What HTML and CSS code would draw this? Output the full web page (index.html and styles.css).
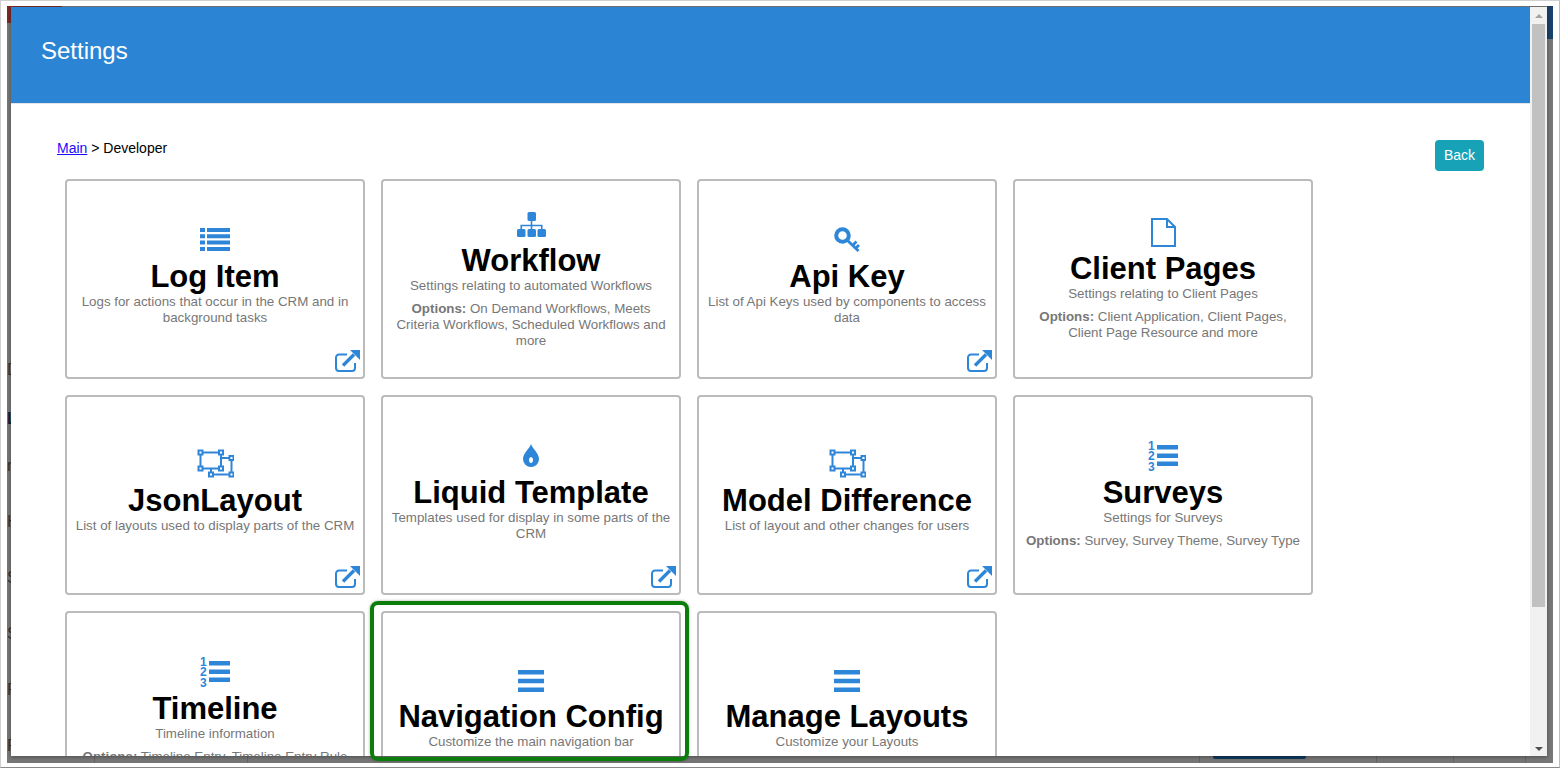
FILE: index.html
```html
<!DOCTYPE html>
<html lang="en">
<head>
<meta charset="utf-8">
<title>Settings</title>
<link rel="stylesheet" href="styles.css">
</head>
<body>
<svg class="defs" width="0" height="0" aria-hidden="true">
  <symbol id="i-ext" viewBox="0 0 25 22">
    <path d="M12 4.500H4a3 3 0 0 0-3 3V18a3 3 0 0 0 3 3h13a3 3 0 0 0 3-3v-5" fill="none" stroke="currentColor" stroke-width="2"/>
    <path d="M8 15.500l11-11" fill="none" stroke="currentColor" stroke-width="3.400"/>
    <path d="M15 0h10v10z" fill="currentColor"/>
  </symbol>
  <symbol id="i-ol" viewBox="0 0 30 30">
    <text class="ol-num" x="0" y="9">1</text>
    <text class="ol-num" x="0" y="19">2</text>
    <text class="ol-num" x="0" y="29.500">3</text>
    <path d="M9 4h21v4.500H9zM9 12.500h21V17H9zM9 20.500h21V25H9z" fill="currentColor"/>
  </symbol>
  <symbol id="i-bars" viewBox="0 0 26 22">
    <path d="M0 0h26v4.600H0zM0 8.700h26v4.600H0zM0 17.400h26V22H0z" fill="currentColor"/>
  </symbol>
  <symbol id="i-group" viewBox="0 0 37 29">
    <path d="M3.500 3.500H24V19.500H3.500zM24 9h10.500v16.500H14V19.500" fill="none" stroke="currentColor" stroke-width="2"/>
    <g fill="#fff" stroke="currentColor" stroke-width="2">
      <rect x="1.500" y="1.500" width="4" height="4"/><rect x="22" y="1.500" width="4" height="4"/>
      <rect x="1.500" y="17.500" width="4" height="4"/><rect x="22" y="17.500" width="4" height="4"/>
      <rect x="32.500" y="7" width="4" height="4"/><rect x="32.500" y="23.500" width="4" height="4"/>
      <rect x="12" y="23.500" width="4" height="4"/>
    </g>
  </symbol>
</svg>

<div class="frame">
  <div class="backdrop">
    <div class="bg-top">
      <span class="bg-red"></span>
      <span class="bg-navy"></span>
    </div>
    <div class="bg-letters">
      <span class="bg-letter">D</span>
      <span class="bg-letter bg-letter-strong">L</span>
      <span class="bg-letter bg-letter-tight">n</span>
      <span class="bg-letter">H</span>
      <span class="bg-letter">S</span>
      <span class="bg-letter">S</span>
      <span class="bg-letter">R</span>
      <span class="bg-letter">F</span>
    </div>
    <div class="bg-bottom">
      <span class="bg-cell bg-cell-a"></span>
      <span class="bg-cell bg-cell-b"></span>
      <span class="bg-cell bg-cell-c"></span>
      <span class="bg-navy-btn"></span>
      <span class="bg-cell bg-cell-d"></span>
      <span class="bg-cell bg-cell-e"></span>
      <span class="bg-cell bg-cell-f"></span>
    </div>

    <div class="modal">
      <div class="modal-main">
        <header class="modal-head">
          <h1 class="modal-title">Settings</h1>
        </header>
        <div class="modal-body">
          <div class="crumb-row">
            <div class="crumbs"><a class="crumb-link" href="#">Main</a> &gt; Developer</div>
            <button class="back-btn" type="button">Back</button>
          </div>
          <div class="cards">
            <article class="card">
              <div class="ico-box"><svg class="ico ico-list" viewBox="0 0 30 23"><path d="M0 0h5v4H0zM0 6.300h5v4H0zM0 12.600h5v4H0zM0 19h5v4H0zM7 0h23v4H7zM7 6.300h23v4H7zM7 12.600h23v4H7zM7 19h23v4H7z" fill="currentColor"/></svg></div>
              <h2 class="card-title">Log Item</h2>
              <p class="card-desc">Logs for actions that occur in the CRM and in background tasks</p>
              <svg class="ext"><use href="#i-ext"/></svg>
            </article>
            <article class="card">
              <div class="ico-box"><svg class="ico ico-flow" viewBox="0 0 29 25"><g fill="currentColor"><rect x="10.500" width="8.500" height="9" rx="1.500"/><rect y="17" width="8.500" height="8" rx="1.500"/><rect x="10.500" y="17" width="8.500" height="8" rx="1.500"/><rect x="20.500" y="17" width="8.500" height="8" rx="1.500"/></g><path d="M14.500 8v9M4.250 17v-3.500h20.500V17" fill="none" stroke="currentColor" stroke-width="1.600"/></svg></div>
              <h2 class="card-title">Workflow</h2>
              <p class="card-desc">Settings relating to automated Workflows</p>
              <p class="card-opts"><b>Options:</b> On Demand Workflows, Meets Criteria Workflows, Scheduled Workflows and more</p>
            </article>
            <article class="card">
              <div class="ico-box"><svg class="ico ico-key" viewBox="0 0 27 25"><circle cx="8.500" cy="8.500" r="6.300" fill="none" stroke="currentColor" stroke-width="4"/><path d="M13 13l11.500 11M18.500 18.500l4-4M21.500 21.500l3.500-3.500" fill="none" stroke="currentColor" stroke-width="2.800"/></svg></div>
              <h2 class="card-title">Api Key</h2>
              <p class="card-desc">List of Api Keys used by components to access data</p>
              <svg class="ext"><use href="#i-ext"/></svg>
            </article>
            <article class="card">
              <div class="ico-box"><svg class="ico ico-file" viewBox="0 0 25 29"><path d="M1 1h15l8 8v19H1zM16 1v8h8" fill="none" stroke="currentColor" stroke-width="2"/></svg></div>
              <h2 class="card-title">Client Pages</h2>
              <p class="card-desc">Settings relating to Client Pages</p>
              <p class="card-opts"><b>Options:</b> Client Application, Client Pages, Client Page Resource and more</p>
            </article>

            <article class="card">
              <div class="ico-box"><svg class="ico ico-group"><use href="#i-group"/></svg></div>
              <h2 class="card-title">JsonLayout</h2>
              <p class="card-desc">List of layouts used to display parts of the CRM</p>
              <svg class="ext"><use href="#i-ext"/></svg>
            </article>
            <article class="card">
              <div class="ico-box"><svg class="ico ico-drop" viewBox="0 0 16 23"><path fill-rule="evenodd" d="M8 0c1 4 8 9 8 15a8 8 0 0 1-16 0C0 9 7 4 8 0zM8 13a2 3 0 1 0 .01 0z" fill="currentColor"/></svg></div>
              <h2 class="card-title">Liquid Template</h2>
              <p class="card-desc">Templates used for display in some parts of the CRM</p>
              <svg class="ext"><use href="#i-ext"/></svg>
            </article>
            <article class="card">
              <div class="ico-box"><svg class="ico ico-group"><use href="#i-group"/></svg></div>
              <h2 class="card-title">Model Difference</h2>
              <p class="card-desc">List of layout and other changes for users</p>
              <svg class="ext"><use href="#i-ext"/></svg>
            </article>
            <article class="card">
              <div class="ico-box"><svg class="ico ico-ol"><use href="#i-ol"/></svg></div>
              <h2 class="card-title">Surveys</h2>
              <p class="card-desc">Settings for Surveys</p>
              <p class="card-opts"><b>Options:</b> Survey, Survey Theme, Survey Type</p>
            </article>

            <article class="card">
              <div class="ico-box"><svg class="ico ico-ol"><use href="#i-ol"/></svg></div>
              <h2 class="card-title">Timeline</h2>
              <p class="card-desc">Timeline information</p>
              <p class="card-opts"><b>Options:</b> Timeline Entry, Timeline Entry Rule</p>
            </article>
            <article class="card">
              <div class="ico-box"><svg class="ico ico-bars"><use href="#i-bars"/></svg></div>
              <h2 class="card-title">Navigation Config</h2>
              <p class="card-desc">Customize the main navigation bar</p>
            </article>
            <article class="card">
              <div class="ico-box"><svg class="ico ico-bars"><use href="#i-bars"/></svg></div>
              <h2 class="card-title">Manage Layouts</h2>
              <p class="card-desc">Customize your Layouts</p>
            </article>
          </div>
        </div>
      </div>
      <div class="scrollbar">
        <span class="sb-up"></span>
        <span class="sb-thumb"></span>
        <span class="sb-down"></span>
      </div>
    </div>
    <div class="highlight"></div>
  </div>
</div>
</body>
</html>
```
FILE: styles.css
```css
* { box-sizing: border-box; }
html, body { margin: 0; height: 770px; overflow: hidden; background: #fff; }
body { font-family: "Liberation Sans", Arial, sans-serif; }
.defs { position: absolute; }

.frame {
  width: 1560px;
  height: 768px;
  padding: 5px 6px 3px 6px;
  border: 1px solid #d0d0d0;
  border-bottom: 1px solid #8a8a8a;
  border-right-color: #bdbdbd;
  background: #fff;
}
.backdrop {
  position: relative;
  height: 757px;
  background: #777;
  display: flex;
  flex-direction: column;
  overflow: hidden;
}

.bg-top { display: flex; justify-content: space-between; align-items: flex-start; height: 33px; flex: none; }
.bg-red { width: 55px; height: 17px; background: #7d2a23; }
.bg-navy { width: 6px; height: 33px; background: #19426b; }

.bg-letters {
  flex: 1;
  display: flex;
  flex-direction: column;
  padding-top: 322px;
  gap: 39px;
  overflow: hidden;
}
.bg-letter { font-size: 16px; line-height: 17px; color: #333; }
.bg-letter-strong { color: #0c2238; font-weight: 700; margin-top: -7px; }
.bg-letter-tight { margin-top: -9px; }

.bg-bottom { height: 7px; flex: none; display: flex; }
.bg-cell { height: 7px; border-right: 1px solid #666; flex: none; }
.bg-cell-a { width: 88px; }
.bg-cell-b { width: 153px; }
.bg-cell-c { width: 952px; }
.bg-navy-btn { width: 93px; height: 3px; margin-left: 13px; background: #103a5e; border-radius: 0 0 2px 2px; flex: none; }
.bg-cell-d { width: 71px; }
.bg-cell-e { width: 77px; }
.bg-cell-f { width: 72px; }

.modal {
  position: absolute;
  left: 4px;
  top: 1px;
  width: 1536px;
  height: 749px;
  display: flex;
  background: #fff;
  box-shadow: 0 1px 4px rgba(0, 0, 0, .35);
}
.modal-main { flex: 1; min-width: 0; overflow: hidden; }
.modal-head {
  height: 97px;
  padding-left: 30px;
  display: flex;
  align-items: center;
  background: #2c85d4;
  border-bottom: 1px solid #e4e4e4;
}
.modal-title { margin: 0 0 8px; font-size: 24px; font-weight: 400; color: #fff; line-height: 28px; }
.modal-body { padding: 36px 46px 0 46px; }

.crumb-row { display: flex; justify-content: space-between; align-items: flex-start; height: 39px; }
.crumbs { font-size: 14px; line-height: 16px; color: #000; }
.crumb-link { color: #1a0dff; }
.back-btn {
  width: 49px;
  height: 31px;
  padding: 0;
  border: 0;
  border-radius: 4px;
  background: #17a2b8;
  color: #fff;
  font: 14px/31px "Liberation Sans", Arial, sans-serif;
}

.cards {
  margin-left: 8px;
  display: grid;
  grid-template-columns: repeat(4, 300px);
  grid-auto-rows: 200px;
  gap: 16px;
}
.card {
  position: relative;
  height: 200px;
  padding: 0 6px;
  display: flex;
  flex-direction: column;
  align-items: center;
  justify-content: center;
  text-align: center;
  border: 2px solid #bbb;
  border-radius: 4px;
  background: #fff;
}
.ico-box { flex: none; height: 30px; display: flex; align-items: center; justify-content: center; }
.ico { display: block; flex: none; color: #2e86d8; }
.ico-list { width: 30px; height: 23px; }
.ico-flow { width: 29px; height: 25px; }
.ico-key { width: 27px; height: 25px; }
.ico-file { width: 25px; height: 29px; }
.ico-group { width: 37px; height: 29px; }
.ico-drop { width: 16px; height: 23px; }
.ico-ol { width: 30px; height: 30px; }
.ico-bars { width: 26px; height: 22px; margin-top: 2px; }
.ol-num { font: 700 12px "Liberation Sans", Arial, sans-serif; fill: #2e86d8; }

.card-title { margin: 4px 0 0; font-size: 31px; font-weight: 700; line-height: 35px; color: #000; }
.card-desc, .card-opts { margin: 0; font-size: 13.33px; line-height: 16px; color: #777; }
.card-desc { margin-bottom: 8px; }
.card-desc:has(+ .card-opts) { margin-bottom: 0; }
.card-opts { margin-top: 7px; }
.card-opts b { font-weight: 700; }

.ext { position: absolute; right: 3px; bottom: 5px; width: 25px; height: 22px; color: #2e86d8; }

.scrollbar {
  flex: none;
  width: 17px;
  display: flex;
  flex-direction: column;
  align-items: center;
  background: #f1f1f1;
}
.sb-up {
  margin-top: 7px;
  width: 0;
  height: 0;
  border-left: 4px solid transparent;
  border-right: 4px solid transparent;
  border-bottom: 4px solid #a3a3a3;
}
.sb-thumb { width: 13px; height: 583px; margin-top: 6px; background: #c1c1c1; }
.sb-down {
  margin-top: auto;
  margin-bottom: 5px;
  width: 0;
  height: 0;
  border-left: 4px solid transparent;
  border-right: 4px solid transparent;
  border-top: 4px solid #505050;
}

.highlight {
  position: absolute;
  left: 363px;
  top: 595px;
  width: 319px;
  height: 160px;
  border: 4px solid #0a7d0a;
  border-radius: 8px;
  box-shadow: 0 0 3px rgba(0, 0, 0, .35);
}
```
